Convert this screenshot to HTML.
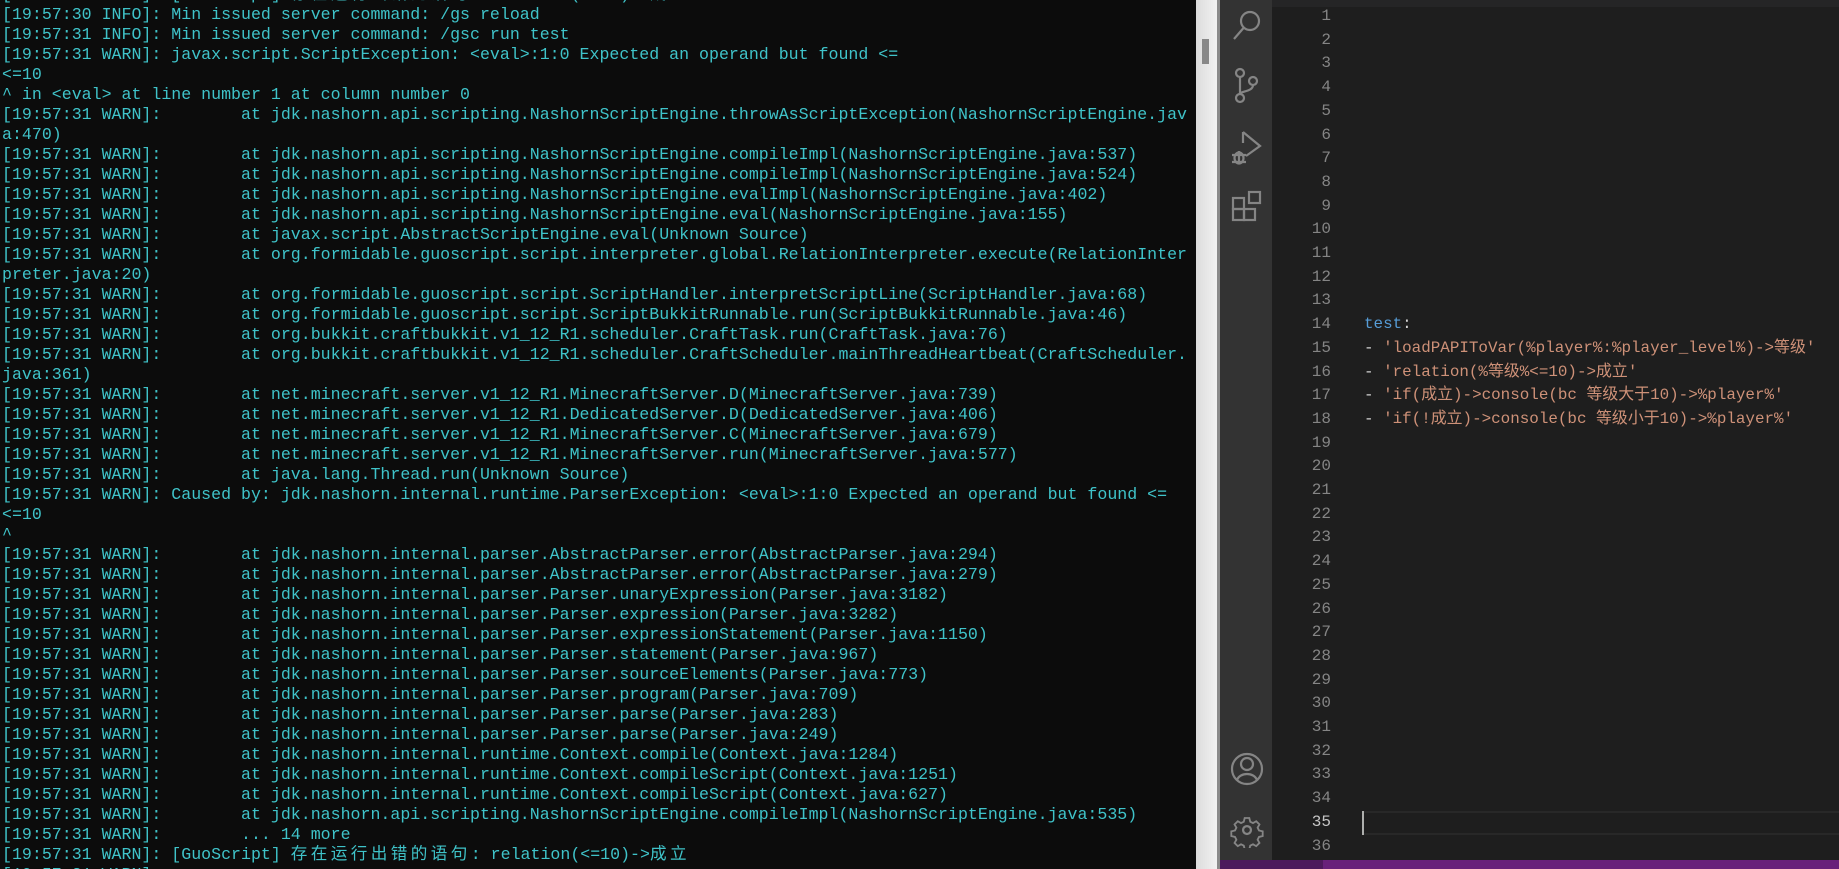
<!DOCTYPE html>
<html><head><meta charset="utf-8"><style>
*{margin:0;padding:0;box-sizing:border-box}
body{width:1839px;height:869px;overflow:hidden;background:#0c0c0c;position:relative}
#term{position:absolute;left:0;top:0;width:1196px;height:869px;background:#0c0c0c;overflow:hidden}
#term pre{position:absolute;left:2px;top:-15px;font-family:"Liberation Mono","Noto Sans CJK SC",monospace;font-size:16.6px;line-height:20px;color:#3fc3c9;white-space:pre}
.c{letter-spacing:3.4px}
#sb{position:absolute;left:1196px;top:0;width:22px;height:869px;background:linear-gradient(90deg,#dcdcdc,#f2f2f2)}
#thumb{position:absolute;left:1202px;top:39px;width:7px;height:25px;background:#888}
#sbb{position:absolute;left:1217px;top:0;width:3px;height:869px;background:#8a8a8a}
#act{position:absolute;left:1220px;top:0;width:52px;height:860px;background:#333}
#ed{position:absolute;left:1272px;top:0;width:567px;height:860px;background:#1e1e1e}
#tabs{position:absolute;left:1272px;top:0;width:567px;height:7px;background:#252526}
.ln{position:absolute;left:1272px;width:59px;text-align:right;font-family:"Liberation Mono",monospace;font-size:16px;color:#858585;line-height:24px}
.code{position:absolute;left:1364px;font-family:"Liberation Mono","Noto Sans CJK SC",monospace;font-size:15.9px;color:#ce9178;line-height:24px;white-space:pre}
#status{position:absolute;left:1220px;top:860px;width:619px;height:9px;background:#68217a}
#status2{position:absolute;left:1220px;top:860px;width:103px;height:9px;background:#4d1a5c}
#cur{position:absolute;left:1362px;top:811px;width:477px;height:24px;border-top:2px solid #282828;border-bottom:2px solid #282828}
#caret{position:absolute;left:1362px;top:811px;width:2px;height:24px;background:#aeafad}
svg{position:absolute}
</style></head><body>
<div id="term"><pre>[19:57:31 WARN]: [GuoScript] <span class="c">存在运行出错的语句</span>: relation(&lt;=10)-&gt;<span class="c">成立</span>
[19:57:30 INFO]: Min issued server command: /gs reload
[19:57:31 INFO]: Min issued server command: /gsc run test
[19:57:31 WARN]: javax.script.ScriptException: &lt;eval&gt;:1:0 Expected an operand but found &lt;=
&lt;=10
^ in &lt;eval&gt; at line number 1 at column number 0
[19:57:31 WARN]:        at jdk.nashorn.api.scripting.NashornScriptEngine.throwAsScriptException(NashornScriptEngine.jav
a:470)
[19:57:31 WARN]:        at jdk.nashorn.api.scripting.NashornScriptEngine.compileImpl(NashornScriptEngine.java:537)
[19:57:31 WARN]:        at jdk.nashorn.api.scripting.NashornScriptEngine.compileImpl(NashornScriptEngine.java:524)
[19:57:31 WARN]:        at jdk.nashorn.api.scripting.NashornScriptEngine.evalImpl(NashornScriptEngine.java:402)
[19:57:31 WARN]:        at jdk.nashorn.api.scripting.NashornScriptEngine.eval(NashornScriptEngine.java:155)
[19:57:31 WARN]:        at javax.script.AbstractScriptEngine.eval(Unknown Source)
[19:57:31 WARN]:        at org.formidable.guoscript.script.interpreter.global.RelationInterpreter.execute(RelationInter
preter.java:20)
[19:57:31 WARN]:        at org.formidable.guoscript.script.ScriptHandler.interpretScriptLine(ScriptHandler.java:68)
[19:57:31 WARN]:        at org.formidable.guoscript.script.ScriptBukkitRunnable.run(ScriptBukkitRunnable.java:46)
[19:57:31 WARN]:        at org.bukkit.craftbukkit.v1_12_R1.scheduler.CraftTask.run(CraftTask.java:76)
[19:57:31 WARN]:        at org.bukkit.craftbukkit.v1_12_R1.scheduler.CraftScheduler.mainThreadHeartbeat(CraftScheduler.
java:361)
[19:57:31 WARN]:        at net.minecraft.server.v1_12_R1.MinecraftServer.D(MinecraftServer.java:739)
[19:57:31 WARN]:        at net.minecraft.server.v1_12_R1.DedicatedServer.D(DedicatedServer.java:406)
[19:57:31 WARN]:        at net.minecraft.server.v1_12_R1.MinecraftServer.C(MinecraftServer.java:679)
[19:57:31 WARN]:        at net.minecraft.server.v1_12_R1.MinecraftServer.run(MinecraftServer.java:577)
[19:57:31 WARN]:        at java.lang.Thread.run(Unknown Source)
[19:57:31 WARN]: Caused by: jdk.nashorn.internal.runtime.ParserException: &lt;eval&gt;:1:0 Expected an operand but found &lt;=
&lt;=10
^
[19:57:31 WARN]:        at jdk.nashorn.internal.parser.AbstractParser.error(AbstractParser.java:294)
[19:57:31 WARN]:        at jdk.nashorn.internal.parser.AbstractParser.error(AbstractParser.java:279)
[19:57:31 WARN]:        at jdk.nashorn.internal.parser.Parser.unaryExpression(Parser.java:3182)
[19:57:31 WARN]:        at jdk.nashorn.internal.parser.Parser.expression(Parser.java:3282)
[19:57:31 WARN]:        at jdk.nashorn.internal.parser.Parser.expressionStatement(Parser.java:1150)
[19:57:31 WARN]:        at jdk.nashorn.internal.parser.Parser.statement(Parser.java:967)
[19:57:31 WARN]:        at jdk.nashorn.internal.parser.Parser.sourceElements(Parser.java:773)
[19:57:31 WARN]:        at jdk.nashorn.internal.parser.Parser.program(Parser.java:709)
[19:57:31 WARN]:        at jdk.nashorn.internal.parser.Parser.parse(Parser.java:283)
[19:57:31 WARN]:        at jdk.nashorn.internal.parser.Parser.parse(Parser.java:249)
[19:57:31 WARN]:        at jdk.nashorn.internal.runtime.Context.compile(Context.java:1284)
[19:57:31 WARN]:        at jdk.nashorn.internal.runtime.Context.compileScript(Context.java:1251)
[19:57:31 WARN]:        at jdk.nashorn.internal.runtime.Context.compileScript(Context.java:627)
[19:57:31 WARN]:        at jdk.nashorn.api.scripting.NashornScriptEngine.compileImpl(NashornScriptEngine.java:535)
[19:57:31 WARN]:        ... 14 more
[19:57:31 WARN]: [GuoScript] <span class="c">存在运行出错的语句</span>: relation(&lt;=10)-&gt;<span class="c">成立</span>
[19:57:31 WARN]:</pre></div>
<div id="sb"></div><div id="thumb"></div><div id="sbb"></div>
<div id="act"></div>
<div id="ed"></div><div id="tabs"></div>
<div id="cur"></div><div id="caret"></div>
<svg style="left:1230px;top:7px" width="34" height="36" viewBox="0 0 34 36" fill="none" stroke="#858585" stroke-width="2.2"><circle cx="20" cy="14" r="9"/><path d="M13.5 21 L4 32"/></svg>
<svg style="left:1230px;top:66px" width="34" height="40" viewBox="0 0 34 40" fill="none" stroke="#858585" stroke-width="2.2"><circle cx="10" cy="7" r="4"/><circle cx="10" cy="32" r="4"/><circle cx="23" cy="15" r="4"/><path d="M10 11V28M23 19c0 7-13 6-13 9"/></svg>
<svg style="left:1230px;top:128px" width="34" height="40" viewBox="0 0 34 40" fill="none" stroke="#858585" stroke-width="2.2"><path d="M13 4 L30 18 L16 28"/><path d="M13 4V15"/><ellipse cx="9" cy="30" rx="4.5" ry="5.5"/><path d="M2 27h14M2 34h14M9 23v13"/></svg>
<svg style="left:1230px;top:190px" width="34" height="36" viewBox="0 0 34 36" fill="none" stroke="#858585" stroke-width="2.2"><rect x="3" y="8" width="11" height="11"/><rect x="3" y="19" width="11" height="11"/><rect x="14" y="19" width="11" height="11"/><rect x="19" y="2" width="11" height="11"/></svg>
<svg style="left:1229px;top:750px" width="36" height="38" viewBox="0 0 36 38" fill="none" stroke="#858585" stroke-width="2.2"><circle cx="18" cy="19" r="15"/><circle cx="18" cy="14" r="6"/><path d="M8 30c3-8 17-8 20 0"/></svg>
<svg style="left:1229px;top:812px" width="36" height="36" viewBox="0 0 32 32" fill="none" stroke="#858585" stroke-width="2"><path d="M13.5 3h5l1 4 3 1.5 3.5-2 3.5 3.5-2 3.5 1.5 3 4 1v5l-4 1-1.5 3 2 3.5-3.5 3.5-3.5-2-3 1.5-1 4h-5l-1-4-3-1.5-3.5 2-3.5-3.5 2-3.5-1.5-3-4-1v-5l4-1 1.5-3-2-3.5 3.5-3.5 3.5 2 3-1.5z" transform="translate(16 16) scale(0.82) translate(-16 -16)"/><circle cx="16" cy="16" r="3.5"/></svg>
<div class="ln" style="top:4px">1</div><div class="ln" style="top:27.7px">2</div><div class="ln" style="top:51.4px">3</div><div class="ln" style="top:75.1px">4</div><div class="ln" style="top:98.8px">5</div><div class="ln" style="top:122.5px">6</div><div class="ln" style="top:146.2px">7</div><div class="ln" style="top:169.9px">8</div><div class="ln" style="top:193.6px">9</div><div class="ln" style="top:217.3px">10</div><div class="ln" style="top:241px">11</div><div class="ln" style="top:264.7px">12</div><div class="ln" style="top:288.4px">13</div><div class="ln" style="top:312.1px">14</div><div class="ln" style="top:335.8px">15</div><div class="ln" style="top:359.5px">16</div><div class="ln" style="top:383.2px">17</div><div class="ln" style="top:406.9px">18</div><div class="ln" style="top:430.6px">19</div><div class="ln" style="top:454.3px">20</div><div class="ln" style="top:478px">21</div><div class="ln" style="top:501.7px">22</div><div class="ln" style="top:525.4px">23</div><div class="ln" style="top:549.1px">24</div><div class="ln" style="top:572.8px">25</div><div class="ln" style="top:596.5px">26</div><div class="ln" style="top:620.2px">27</div><div class="ln" style="top:643.9px">28</div><div class="ln" style="top:667.6px">29</div><div class="ln" style="top:691.3px">30</div><div class="ln" style="top:715px">31</div><div class="ln" style="top:738.7px">32</div><div class="ln" style="top:762.4px">33</div><div class="ln" style="top:786.1px">34</div><div class="ln" style="top:809.8px;color:#c6c6c6">35</div><div class="ln" style="top:833.5px">36</div>
<div class="code" style="top:312.1px"><span style="color:#569cd6">test</span><span style="color:#d4d4d4">:</span></div>
<div class="code" style="top:335.8px"><span style="color:#d4d4d4">- </span>'loadPAPIToVar(%player%:%player_level%)-&gt;等级'</div>
<div class="code" style="top:359.5px"><span style="color:#d4d4d4">- </span>'relation(%等级%&lt;=10)-&gt;成立'</div>
<div class="code" style="top:383.2px"><span style="color:#d4d4d4">- </span>'if(成立)-&gt;console(bc 等级大于10)-&gt;%player%'</div>
<div class="code" style="top:406.9px"><span style="color:#d4d4d4">- </span>'if(!成立)-&gt;console(bc 等级小于10)-&gt;%player%'</div>
<div id="status"></div><div id="status2"></div>
</body></html>
